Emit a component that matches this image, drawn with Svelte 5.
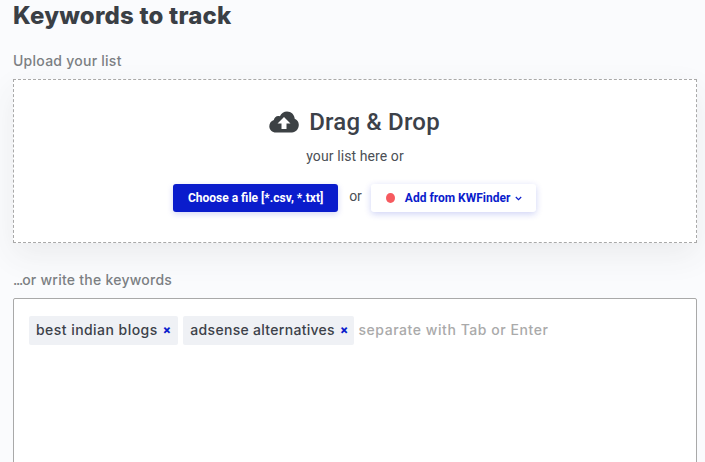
<script lang="ts">
    const keywords = ["best indian blogs", "adsense alternatives"];
</script>

<main class="page">
    <h1>Keywords to track</h1>

    <div class="label upload-label">Upload your list</div>
    <section class="drop">
        <div class="drop-title">
            <svg class="cloud" width="30" height="22" viewBox="0 0 30 22" aria-hidden="true">
                <path fill="#3c4144" d="M7 21.5C3.2 21.5.3 18.8.3 15.2c0-2.9 1.8-5.3 4.5-6.200C5.200 6.700 7 5 9.200 5c.6 0 1.100.1 1.700.3C12.300 2.200 15 .4 18 .4c4.200 0 7.500 3.200 7.700 7.300 2.400.9 4.100 3.300 4.100 6.100 0 4.200-3 7.700-6.800 7.700z"/>
                <path fill="#fff" d="M15 6l6.500 6.500h-4v5.500h-5v-5.500h-4z"/>
            </svg>
            <span>Drag &amp; Drop</span>
        </div>
        <p class="drop-sub">your list here or</p>
        <div class="actions">
            <button class="primary">Choose a file [*.csv, *.txt]</button>
            <span class="or">or</span>
            <button class="secondary">
                <span class="dot"></span>
                <span>Add from KWFinder</span>
                <svg width="7" height="5" viewBox="0 0 7 5" aria-hidden="true">
                    <path d="M.8 1l2.700 2.600L6.200 1" fill="none" stroke="#0a1ccc" stroke-width="1.200"/>
                </svg>
            </button>
        </div>
    </section>

    <div class="label write-label"><span class="dots">...</span>or write the keywords</div>
    <section class="editor">
        {#each keywords as keyword}
            <span class="tag">{keyword}<b class="remove">×</b></span>
        {/each}
        <span class="placeholder">separate with Tab or Enter</span>
    </section>
</main>

<style>
    :global(body) {
        margin: 0;
        background: #fafbfd;
    }

    .page {
        box-sizing: border-box;
        height: 462px;
        padding: 0 8px 0 13px;
        overflow: hidden;
        font-family: Inter, "Open Sans", sans-serif;
    }

    h1 {
        margin: 0;
        padding-top: 1px;
        font-size: 24px;
        line-height: 30px;
        font-weight: 800;
        letter-spacing: 0.2px;
        color: #3a3f45;
    }

    .label {
        font-size: 14px;
        line-height: 18px;
        font-weight: 500;
        letter-spacing: 0.25px;
        color: #7c7f83;
    }

    .dots {
        letter-spacing: -1.2px;
    }

    .upload-label {
        margin-top: 21px;
    }

    .drop {
        box-sizing: border-box;
        height: 164px;
        margin-top: 9px;
        padding-top: 25px;
        background: #fff;
        border: 1px dashed #a9a9a9;
        box-shadow: 0 12px 30px rgb(60 65 70 / 8%);
        font-family: Roboto, sans-serif;
        text-align: center;
    }

    .drop-title {
        display: flex;
        align-items: center;
        justify-content: center;
        gap: 10px;
        height: 34px;
        padding-right: 1px;
        font-size: 24px;
        font-weight: 500;
        letter-spacing: 0.2px;
        color: #3c4149;
    }

    .drop-sub {
        margin: 7px 0 0;
        font-size: 14px;
        line-height: 20px;
        letter-spacing: 0.1px;
        color: #4b4f55;
    }

    .actions {
        display: flex;
        align-items: center;
        justify-content: center;
        gap: 10px;
        margin-top: 18px;
        padding-right: 1px;
    }

    button {
        height: 28px;
        border: 0;
        border-radius: 3px;
        font-family: Roboto, sans-serif;
        font-size: 12px;
        font-weight: 700;
    }

    .primary {
        width: 165px;
        padding: 0;
        background: #0a1ccc;
        color: #fff;
        box-shadow: 0 2px 6px rgb(10 28 204 / 18%);
    }

    .or {
        margin: -5px -1px 0 1px;
        font-size: 14px;
        color: #4b4f55;
    }

    .secondary {
        display: flex;
        align-items: center;
        gap: 5px;
        width: 165px;
        padding: 0 0 0 15px;
        background: #fff;
        color: #0a1ccc;
        box-shadow: 0 2px 7px rgb(10 28 204 / 20%);
    }

    .dot {
        width: 9px;
        height: 10px;
        margin-right: 5px;
        border-radius: 50%;
        background: #f65a5f;
    }

    .write-label {
        margin-top: 28px;
    }

    .editor {
        display: flex;
        align-items: flex-start;
        gap: 5px;
        box-sizing: border-box;
        height: 190px;
        margin-top: 9px;
        padding: 17px 15px;
        background: #fff;
        border: 1px solid #a9a9a9;
        border-radius: 2px;
        font-size: 14px;
    }

    .tag {
        display: flex;
        align-items: center;
        height: 29px;
        padding: 0 7px 2px 7px;
        box-sizing: border-box;
        border-radius: 2px;
        background: #eff1f5;
        font-weight: 500;
        letter-spacing: 0.45px;
        color: #3c4149;
        white-space: nowrap;
    }

    .tag:nth-child(2) {
        padding-right: 5px;
        letter-spacing: 0.3px;
    }

    .remove {
        margin-left: 5px;
        font-size: 12px;
        font-weight: 800;
        color: #0a1ccc;
    }

    .placeholder {
        line-height: 27px;
        font-weight: 500;
        letter-spacing: 0.55px;
        color: #aaa;
        white-space: nowrap;
    }
</style>
